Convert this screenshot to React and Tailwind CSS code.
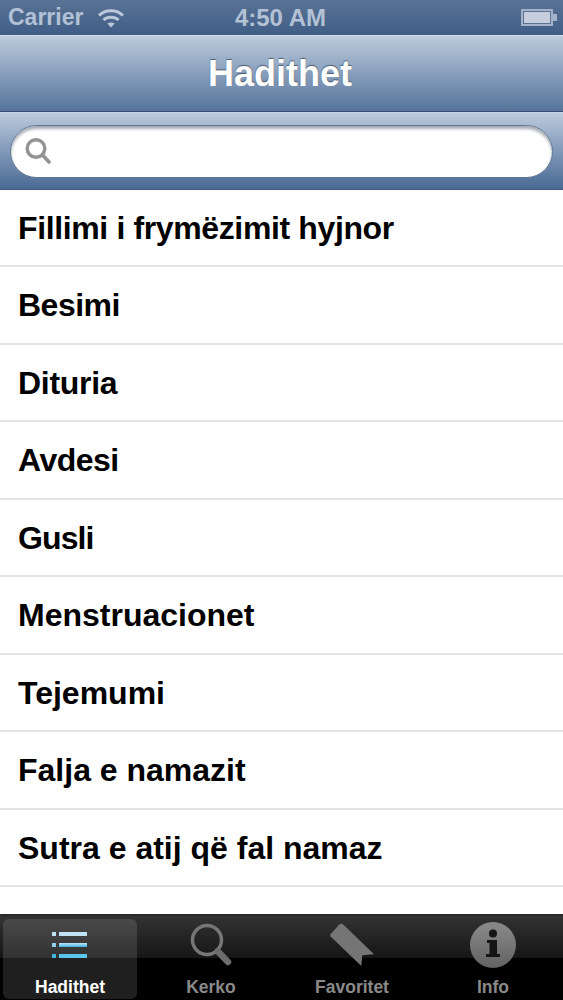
import React from "react";

const items = [
  { title: "Fillimi i frymëzimit hyjnor", spacing: "tracking-[-0.37px]" },
  { title: "Besimi", spacing: "tracking-[-0.5px]" },
  { title: "Dituria", spacing: "tracking-[-0.3px]" },
  { title: "Avdesi", spacing: "tracking-[-0.5px]" },
  { title: "Gusli", spacing: "tracking-[-0.9px]" },
  { title: "Menstruacionet", spacing: "" },
  { title: "Tejemumi", spacing: "" },
  { title: "Falja e namazit", spacing: "" },
  { title: "Sutra e atij që fal namaz", spacing: "" },
];

const ListIcon = () => (
  <svg width="36" height="30" viewBox="0 0 36 30">
    <defs>
      <linearGradient id="blue" x1="0" y1="0" x2="0" y2="1">
        <stop offset="0" stopColor="#c4e6f7" />
        <stop offset="1" stopColor="#3fb2e2" />
      </linearGradient>
    </defs>
    <rect x="0" y="2" width="4" height="4" fill="#bfe3f5" />
    <rect x="7" y="2" width="28" height="4" fill="#bfe3f5" />
    <rect x="0" y="13" width="4" height="4" fill="#8fd0ef" />
    <rect x="7" y="13" width="28" height="4" fill="url(#blue)" />
    <rect x="0" y="24" width="4" height="4" fill="#45b4e4" />
    <rect x="7" y="24" width="28" height="4" fill="#5cc3ea" />
  </svg>
);

const SearchIcon = () => (
  <svg width="42" height="44" viewBox="0 0 42 44" fill="none">
    <circle cx="17" cy="17" r="14.5" stroke="#767676" strokeWidth="3.5" />
    <path d="M27.5 28 L38 39" stroke="#6c6c6c" strokeWidth="6.5" strokeLinecap="round" />
  </svg>
);

const RibbonIcon = () => (
  <svg width="45" height="45" viewBox="0 0 46 46">
    <path
      d="M1 11 L9 2 Q11 0 13 1 L45 32 L33 33 L32 44 L2 15 Q-1 13 1 11 Z"
      fill="#757575"
    />
  </svg>
);

const InfoIcon = () => (
  <svg width="46" height="46" viewBox="0 0 46 46">
    <defs>
      <linearGradient id="grey" x1="0" y1="0" x2="0" y2="1">
        <stop offset="0" stopColor="#8a8a8a" />
        <stop offset="1" stopColor="#626262" />
      </linearGradient>
    </defs>
    <circle cx="23" cy="23" r="23" fill="url(#grey)" />
    <circle cx="23" cy="11.5" r="4" fill="#151515" />
    <path
      d="M17 18 H27 V32 H30 V35 H16 V32 H19.5 V21 H17 Z"
      fill="#151515"
    />
  </svg>
);

const TabItem = ({ icon, label, active }) => (
  <div
    className={`flex flex-1 flex-col items-center rounded-md ${
      active ? "bg-white/12" : ""
    }`}
  >
    <div className="flex h-[52px] items-center justify-center">{icon}</div>
    <span
      className={`mt-[6px] text-[17.5px] leading-5 font-bold ${
        active ? "text-white" : "text-[#8a8a8a]"
      }`}
    >
      {label}
    </span>
  </div>
);

const App = () => {
  return (
    <div className="flex h-[1000px] w-[563px] flex-col overflow-hidden bg-white font-['Liberation_Sans',Arial,sans-serif]">
      {/* status bar */}
      <div className="grid h-[35px] grid-cols-[1fr_auto_1fr] items-center bg-gradient-to-b from-[#5a7294] to-[#3f5e87] pr-[6px] pl-[8px]">
        <div className="flex items-center gap-[14px]">
          <span className="text-[23px] leading-none font-bold text-[#b3c1d6]">Carrier</span>
          <svg width="28" height="20" viewBox="0 0 27 20" fill="none" stroke="#bcc9dc" strokeWidth="3">
            <path d="M1.5 7.5 C8 1 19 1 25.5 7.5" />
            <path d="M6 12 C10 8.3 17 8.3 21 12" />
            <path d="M13.5 19.5 L9.8 15.6 C11.8 14 15.2 14 17.2 15.6 Z" fill="#bcc9dc" stroke="none" />
          </svg>
        </div>
        <span className="pr-[4px] text-[24px] leading-none font-bold text-[#b3c1d6]">4:50 AM</span>
        <div className="flex items-center justify-end">
          <div className="h-[17px] w-[32px] border-2 border-[#a3b2ca] bg-[#c6cedd] ring-1 ring-inset ring-[#5a7294]" />
          <div className="h-[7px] w-[4px] bg-[#a3b2ca]" />
        </div>
      </div>

      {/* nav bar */}
      <div className="flex h-[77px] items-center justify-center border-t border-b border-t-[#d5deea] border-b-[#3a4f6e] bg-gradient-to-b from-[#bccbdd] to-[#56749b] pr-[3px]">
        <h1 className="text-[36px] leading-none font-bold text-white [text-shadow:0_-1px_1px_rgba(50,60,80,0.7)]">Hadithet</h1>
      </div>

      {/* search bar */}
      <div className="flex h-[78px] items-center border-t border-b border-t-[#c5d6ee] border-b-[#3f5a80] bg-gradient-to-b from-[#bccbdd] to-[#4a6a94] px-[10px]">
        <div className="flex h-[53px] w-full items-center rounded-full border border-[#5f7596] bg-white pl-[14px] shadow-[inset_0_3px_3px_rgba(60,70,90,0.45)]">
          <svg width="26" height="28" viewBox="0 0 26 28" fill="none">
            <circle cx="11" cy="11.5" r="8.8" stroke="#939393" strokeWidth="3.4" />
            <path d="M17.5 18 L24 25" stroke="#939393" strokeWidth="3.6" strokeLinecap="round" />
          </svg>
        </div>
      </div>

      {/* list */}
      <div className="flex-1 overflow-hidden">
        {items.map((item) => (
          <div
            key={item.title}
            className={`flex h-[77.5px] items-center border-b-2 border-[#e3e3e3] pt-[1px] pl-[18px] text-[32px] leading-none font-bold text-black first:h-[77px] ${item.spacing}`}
          >
            {item.title}
          </div>
        ))}
      </div>

      {/* tab bar */}
      <div className="relative h-[86px] border-t-2 border-[#2a2a2a] bg-black">
        <div className="absolute inset-x-0 top-0 h-[42px] bg-gradient-to-b from-[#333333] to-[#161616]" />
        <div className="relative flex h-full gap-[7px] px-[3px] pt-[3px] pb-[1px]">
          <TabItem icon={<ListIcon />} label="Hadithet" active />
          <TabItem icon={<SearchIcon />} label="Kerko" />
          <TabItem icon={<RibbonIcon />} label="Favoritet" />
          <TabItem icon={<InfoIcon />} label="Info" />
        </div>
      </div>
    </div>
  );
};

export default App;
